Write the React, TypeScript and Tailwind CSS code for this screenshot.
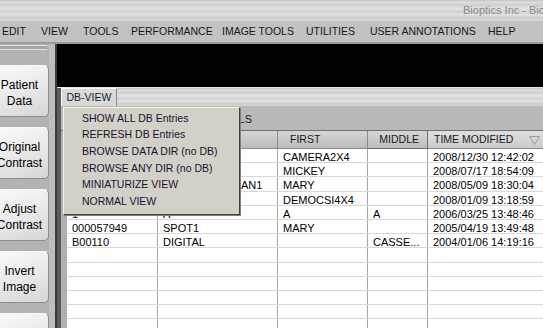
import React from "react";

const topMenu = [
  { label: "EDIT", w: "w-[39px]" },
  { label: "VIEW", w: "w-[42px]" },
  { label: "TOOLS", w: "w-[48px]" },
  { label: "PERFORMANCE", w: "w-[91px]" },
  { label: "IMAGE TOOLS", w: "w-[84px]" },
  { label: "UTILITIES", w: "w-[64px]" },
  { label: "USER ANNOTATIONS", w: "w-[118px]" },
  { label: "HELP", w: "w-[50px]" },
];

const sideButtons = [
  ["Patient", "Data"],
  ["Original", "Contrast"],
  ["Adjust", "Contrast"],
  ["Invert", "Image"],
  ["Full", "Screen"],
];

const dbMenu = [
  "SHOW ALL DB Entries",
  "REFRESH DB Entries",
  "BROWSE DATA DIR (no DB)",
  "BROWSE ANY DIR (no DB)",
  "MINIATURIZE VIEW",
  "NORMAL VIEW",
];

type Entry = { id: string; last: string; first: string; middle: string; time: string };

const entries: Entry[] = [
  { id: "000012345", last: "SIEMENS", first: "CAMERA2X4", middle: "", time: "2008/12/30 12:42:02" },
  { id: "000054321", last: "MOUSE", first: "MICKEY", middle: "", time: "2008/07/17 18:54:09" },
  { id: "000098765", last: "STANDARD PHAN1", first: "MARY", middle: "", time: "2008/05/09 18:30:04" },
  { id: "000011111", last: "PHANTOM", first: "DEMOCSI4X4", middle: "", time: "2008/01/09 13:18:59" },
  { id: "1", last: "A", first: "A", middle: "A", time: "2006/03/25 13:48:46" },
  { id: "000057949", last: "SPOT1", first: "MARY", middle: "", time: "2005/04/19 13:49:48" },
  { id: "B00110", last: "DIGITAL", first: "", middle: "CASSE...", time: "2004/01/06 14:19:16" },
];

const brushed =
  "bg-[linear-gradient(180deg,#c4c4c4_0%,#dedede_12%,#cdcdcd_25%,#e4e4e4_42%,#d2d2d2_58%,#e2e2e2_74%,#cbcbcb_88%,#d8d8d8_100%)]";

export default function App() {
  const emptyRows = Array.from({ length: 7 });

  return (
    <div className="relative w-[543px] h-[328px] overflow-hidden bg-[#b4b4b4] font-['Liberation_Sans',Arial,sans-serif] select-none">
      {/* title bar */}
      <div className={`h-[20px] flex items-center justify-start pl-[463px] ${brushed}`}>
        <span className="text-[11px] text-[#8a8a8a] whitespace-nowrap">Bioptics Inc - BioVision</span>
      </div>

      {/* menu bar */}
      <div className="h-[22px] flex items-center pl-[2px] pt-[1px] bg-[#c2c2c2] border-t border-[#d6d6d6]">
        {topMenu.map((m) => (
          <div key={m.label} className={`${m.w} shrink-0 text-[10.5px] text-[#161616] whitespace-nowrap`}>
            {m.label}
          </div>
        ))}
      </div>
      <div className="h-[2px] bg-[#9c9c9c]" />

      <div className="flex h-[284px]">
        {/* left tool strip */}
        <div className="w-[55px] shrink-0 bg-[#b3b3b3] border-r-[6px] border-[#bdbdbd] flex flex-col overflow-hidden">
          <div className="mt-[1px] mr-[2px] h-[5px] shrink-0 border-t border-b border-[#e2e2e2] bg-[#a6a6a6]" />
          <div className="flex flex-col gap-[10px] mt-[15px]">
            {sideButtons.map(([a, b], i) => (
              <div
                key={i}
                className="ml-[-12px] w-[61px] h-[52px] shrink-0 rounded-r-[5px] border border-t-[#fafafa] border-l-[#fafafa] border-r-[#8c8c8c] border-b-[#8c8c8c] bg-[linear-gradient(160deg,#fbfbfb_0%,#ececec_45%,#d6d6d6_100%)] flex flex-col items-center justify-center pt-[3px] pl-[2px]"
              >
                <span className="text-[12px] leading-[16px] text-black">{a}</span>
                <span className="text-[12px] leading-[16px] text-black">{b}</span>
              </div>
            ))}
          </div>
        </div>
        <div className="w-[2px] shrink-0 bg-[#3c3c3c]" />

        {/* right area */}
        <div className="flex-1 flex flex-col min-w-0">
          <div className="h-[43px] shrink-0 bg-black" />
          <div className="h-[1px] shrink-0 bg-[#e8e8e8]" />

          <div className="flex-1 min-h-0 overflow-hidden flex flex-col border-l-[4px] border-[#5c5c5c] bg-[#b6b6b6]">
            {/* tab row */}
            <div className={`h-[18px] shrink-0 flex items-end ${brushed}`}>
              <div className="w-[56px] h-[18px] bg-[#d9d9d9] border-t border-l border-[#f8f8f8] border-r border-r-[#8a8a8a] flex items-center justify-center pt-[1px] text-[10.5px] text-[#1c1c2c]">
                DB-VIEW
              </div>
            </div>
            {/* gray band */}
            <div className="h-[24px] shrink-0 flex items-center bg-[#b9b9b9]">
              <div className="w-[191px] text-right text-[11px] text-[#202020] pt-[2px]">DETAILS</div>
            </div>
            <div className="h-[1px] shrink-0 bg-[#707070]" />

            {/* table */}
            <div className="flex-1 min-h-0 flex pl-[6px] bg-[#b0b0b0]">
              <div className="flex-1 bg-white overflow-hidden">
                <div className="grid grid-cols-[91px_120px_90px_60px_140px] h-[18px] text-[10.5px] text-[#1a1a1a]">
                  <div className="border-r border-[#8a8a8a] border-b bg-[linear-gradient(180deg,#d6d6d6,#bcbcbc)] flex items-center pl-[6px]">ID</div>
                  <div className="border-r border-[#8a8a8a] border-b bg-[linear-gradient(180deg,#d6d6d6,#bcbcbc)] flex items-center pl-[12px]">LAST</div>
                  <div className="border-r border-[#8a8a8a] border-b bg-[linear-gradient(180deg,#d6d6d6,#bcbcbc)] flex items-center pl-[12px]">FIRST</div>
                  <div className="border-r border-[#6e6e6e] border-b bg-[linear-gradient(180deg,#d6d6d6,#bcbcbc)] flex items-center justify-end pr-[8px]">MIDDLE</div>
                  <div className="border-b border-[#8a8a8a] bg-[linear-gradient(180deg,#e0e0e0,#cacaca)] flex items-center pl-[6px] relative">
                    TIME MODIFIED
                    <svg className="absolute left-[101px] top-[5px]" width="11" height="9" viewBox="0 0 11 9">
                      <path d="M0.5 0.5 H10.5 L5.5 8.5 Z" fill="none" stroke="#9a9a9a" strokeWidth="1" />
                    </svg>
                  </div>
                </div>

                {entries.map((e, i) => (
                  <div
                    key={i}
                    className="grid grid-cols-[91px_120px_90px_60px_140px] h-[14.2px] text-[11px] leading-[14px] text-black border-b border-[#dcd8d0] overflow-hidden"
                  >
                    <div className="border-r border-[#a6a6a6] pl-[5px] pt-[1px] whitespace-nowrap overflow-hidden">{e.id}</div>
                    <div className="border-r border-[#a6a6a6] pl-[5px] pt-[1px] whitespace-nowrap overflow-hidden">{e.last}</div>
                    <div className="border-r border-[#a6a6a6] pl-[5px] pt-[1px] whitespace-nowrap overflow-hidden">{e.first}</div>
                    <div className="border-r border-[#a6a6a6] pl-[5px] pt-[1px] whitespace-nowrap overflow-hidden">{e.middle}</div>
                    <div className="pl-[5px] pt-[1px] whitespace-nowrap overflow-hidden">{e.time}</div>
                  </div>
                ))}
                {emptyRows.map((_, i) => (
                  <div
                    key={`empty-${i}`}
                    className="grid grid-cols-[91px_120px_90px_60px_140px] h-[14.2px] border-b border-[#dcd8d0]"
                  >
                    <div className="border-r border-[#a6a6a6]" />
                    <div className="border-r border-[#a6a6a6]" />
                    <div className="border-r border-[#a6a6a6]" />
                    <div className="border-r border-[#a6a6a6]" />
                    <div />
                  </div>
                ))}
              </div>
            </div>
          </div>
        </div>
      </div>

      {/* DB-VIEW dropdown menu */}
      <div className="absolute left-[63px] top-[107px] w-[177px] h-[108px] bg-[#d4d0c8] border border-t-[#f4f2ee] border-l-[#f4f2ee] border-r-[#404040] border-b-[#404040] shadow-[1px_1px_0_#808080] pt-[1.5px]">
        {dbMenu.map((item) => (
          <div key={item} className="h-[16.7px] leading-[16.7px] pl-[18px] text-[10.5px] text-[#14142c] whitespace-nowrap">
            {item}
          </div>
        ))}
      </div>
    </div>
  );
}
